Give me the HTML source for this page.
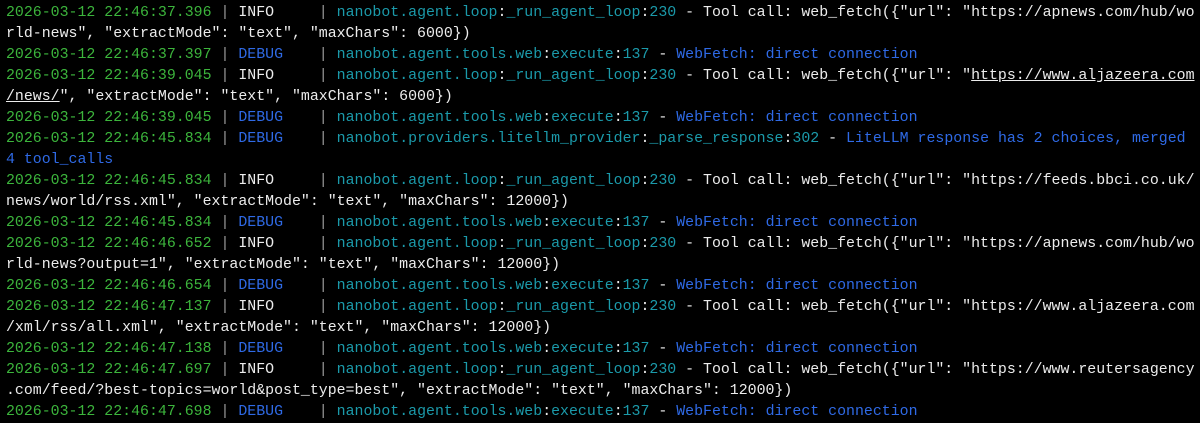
<!DOCTYPE html>
<html><head><meta charset="utf-8"><style>
html,body{margin:0;background:#000;width:1200px;height:422px;overflow:hidden}
pre{margin:0;position:absolute;left:6px;top:3px;font-family:"Liberation Mono",monospace;font-size:14.9px;line-height:21px;color:#ececec;white-space:pre}
.g{color:#3cb53c}.b{color:#2f6ae6}.c{color:#1b9aaa}.p{color:#9a9a9a}.u{text-decoration:underline}
</style></head><body><pre><span class="g">2026-03-12 22:46:37.396</span> <span class="p">|</span> INFO     <span class="p">|</span> <span class="c">nanobot.agent.loop</span>:<span class="c">_run_agent_loop</span>:<span class="c">230</span> - Tool call: web_fetch({"url": "https://apnews.com/hub/wo
rld-news", "extractMode": "text", "maxChars": 6000})
<span class="g">2026-03-12 22:46:37.397</span> <span class="p">|</span> <span class="b">DEBUG</span>    <span class="p">|</span> <span class="c">nanobot.agent.tools.web</span>:<span class="c">execute</span>:<span class="c">137</span> - <span class="b">WebFetch: direct connection</span>
<span class="g">2026-03-12 22:46:39.045</span> <span class="p">|</span> INFO     <span class="p">|</span> <span class="c">nanobot.agent.loop</span>:<span class="c">_run_agent_loop</span>:<span class="c">230</span> - Tool call: web_fetch({"url": "<span class="u">https://www.aljazeera.com</span>
<span class="u">/news/</span>", "extractMode": "text", "maxChars": 6000})
<span class="g">2026-03-12 22:46:39.045</span> <span class="p">|</span> <span class="b">DEBUG</span>    <span class="p">|</span> <span class="c">nanobot.agent.tools.web</span>:<span class="c">execute</span>:<span class="c">137</span> - <span class="b">WebFetch: direct connection</span>
<span class="g">2026-03-12 22:46:45.834</span> <span class="p">|</span> <span class="b">DEBUG</span>    <span class="p">|</span> <span class="c">nanobot.providers.litellm_provider</span>:<span class="c">_parse_response</span>:<span class="c">302</span> - <span class="b">LiteLLM response has 2 choices, merged</span>
<span class="b">4 tool_calls</span>
<span class="g">2026-03-12 22:46:45.834</span> <span class="p">|</span> INFO     <span class="p">|</span> <span class="c">nanobot.agent.loop</span>:<span class="c">_run_agent_loop</span>:<span class="c">230</span> - Tool call: web_fetch({"url": "https://feeds.bbci.co.uk/
news/world/rss.xml", "extractMode": "text", "maxChars": 12000})
<span class="g">2026-03-12 22:46:45.834</span> <span class="p">|</span> <span class="b">DEBUG</span>    <span class="p">|</span> <span class="c">nanobot.agent.tools.web</span>:<span class="c">execute</span>:<span class="c">137</span> - <span class="b">WebFetch: direct connection</span>
<span class="g">2026-03-12 22:46:46.652</span> <span class="p">|</span> INFO     <span class="p">|</span> <span class="c">nanobot.agent.loop</span>:<span class="c">_run_agent_loop</span>:<span class="c">230</span> - Tool call: web_fetch({"url": "https://apnews.com/hub/wo
rld-news?output=1", "extractMode": "text", "maxChars": 12000})
<span class="g">2026-03-12 22:46:46.654</span> <span class="p">|</span> <span class="b">DEBUG</span>    <span class="p">|</span> <span class="c">nanobot.agent.tools.web</span>:<span class="c">execute</span>:<span class="c">137</span> - <span class="b">WebFetch: direct connection</span>
<span class="g">2026-03-12 22:46:47.137</span> <span class="p">|</span> INFO     <span class="p">|</span> <span class="c">nanobot.agent.loop</span>:<span class="c">_run_agent_loop</span>:<span class="c">230</span> - Tool call: web_fetch({"url": "https://www.aljazeera.com
/xml/rss/all.xml", "extractMode": "text", "maxChars": 12000})
<span class="g">2026-03-12 22:46:47.138</span> <span class="p">|</span> <span class="b">DEBUG</span>    <span class="p">|</span> <span class="c">nanobot.agent.tools.web</span>:<span class="c">execute</span>:<span class="c">137</span> - <span class="b">WebFetch: direct connection</span>
<span class="g">2026-03-12 22:46:47.697</span> <span class="p">|</span> INFO     <span class="p">|</span> <span class="c">nanobot.agent.loop</span>:<span class="c">_run_agent_loop</span>:<span class="c">230</span> - Tool call: web_fetch({"url": "https://www.reutersagency
.com/feed/?best-topics=world&amp;post_type=best", "extractMode": "text", "maxChars": 12000})
<span class="g">2026-03-12 22:46:47.698</span> <span class="p">|</span> <span class="b">DEBUG</span>    <span class="p">|</span> <span class="c">nanobot.agent.tools.web</span>:<span class="c">execute</span>:<span class="c">137</span> - <span class="b">WebFetch: direct connection</span></pre></body></html>
